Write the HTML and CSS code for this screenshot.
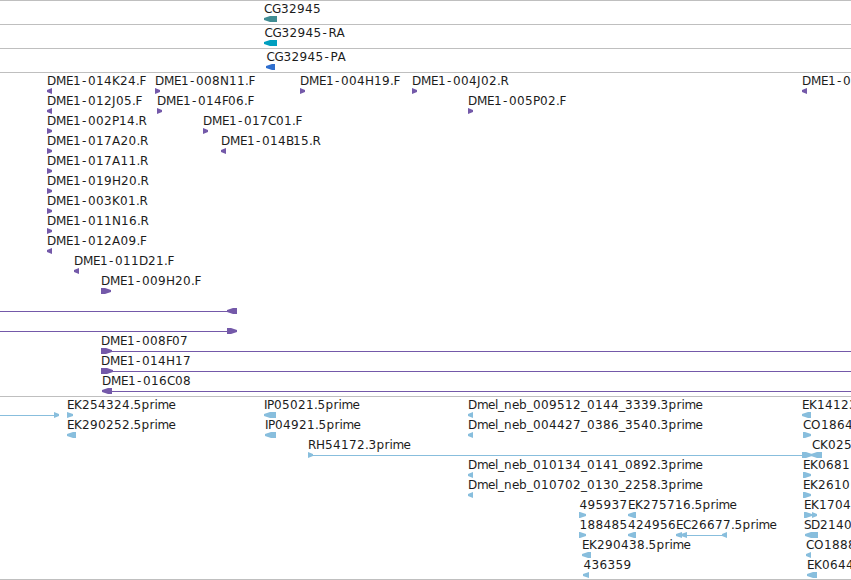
FILE: index.html
```html
<!DOCTYPE html>
<html lang="en">
<head>
    <meta charset="UTF-8">
    <title>Genome Tracks</title>
    <link rel="stylesheet" href="styles.css">
</head>
<body>
    <main class="viewer">
        <section class="track gene" id="gene"></section>
        <section class="track transcript" id="transcript"></section>
        <section class="track protein" id="protein"></section>
        <section class="track clones" id="clones"></section>
        <section class="track ests" id="ests"></section>
    </main>
    <script src="tracks.js"></script>
</body>
</html>
```
FILE: styles.css
```css
body {
    margin: 0;
    background: #fff;
    overflow: hidden;
}
.viewer {
    display: flex;
    flex-direction: column;
}
.track {
    box-sizing: border-box;
    height: 24px;
    border-top: 1px solid #bfbfbf;
    overflow: hidden;
}
.track svg {
    display: block;
    width: 100%;
    height: 100%;
}
.track text {
    font-family: "DejaVu Sans", sans-serif;
    font-size: 12px;
    fill: #1c1c1c;
}
.gene {
    color: #408d93;
}
.transcript {
    color: #009fbf;
}
.protein {
    color: #2f6fcf;
}
.clones {
    height: 324px;
    color: #7459a9;
}
.ests {
    height: 184px;
    border-bottom: 1px solid #bfbfbf;
    color: #88bedd;
}
.shape {
    fill: currentColor;
}
```
FILE: tracks.js
```js
const ROW = 20;
const SVG = 'http://www.w3.org/2000/svg';

// character widths in pixels
const WIDTHS = {
    A: 8.5, B: 7, C: 8, D: 9, E: 7, F: 6, G: 9, H: 9, I: 3, J: 4, K: 8, M: 10, N: 9,
    O: 10, P: 7, R: 8, S: 7, '-': 7, '.': 3.5, _: 6,
    b: 8, e: 7, i: 3, l: 3, m: 11, n: 8, p: 8, r: 5
};

// labels: [row, x, text]
// arrows: [row, start, end, direction]
// lines:  [row, start, end]
const tracks = {
    gene: { labels: [[0, 264, 'CG32945']], arrows: [[0, 264, 277, 'l']], lines: [] },
    transcript: { labels: [[0, 264.5, 'CG32945-RA']], arrows: [[0, 264, 277, 'l']], lines: [] },
    protein: { labels: [[0, 266.5, 'CG32945-PA']], arrows: [[0, 266, 275, 'l']], lines: [] },
    clones: {
        labels: [
            [0, 47, 'DME1-014K24.F'], [0, 155, 'DME1-008N11.F'], [0, 300, 'DME1-004H19.F'],
            [0, 412, 'DME1-004J02.R'], [0, 802, 'DME1-0'],
            [1, 47, 'DME1-012J05.F'], [1, 157, 'DME1-014F06.F'], [1, 468, 'DME1-005P02.F'],
            [2, 47, 'DME1-002P14.R'], [2, 203, 'DME1-017C01.F'],
            [3, 47, 'DME1-017A20.R'], [3, 221, 'DME1-014B15.R'],
            [4, 47, 'DME1-017A11.R'],
            [5, 47, 'DME1-019H20.R'],
            [6, 47, 'DME1-003K01.R'],
            [7, 47, 'DME1-011N16.R'],
            [8, 47, 'DME1-012A09.F'],
            [9, 74, 'DME1-011D21.F'],
            [10, 101, 'DME1-009H20.F'],
            [13, 101, 'DME1-008F07'],
            [14, 101, 'DME1-014H17'],
            [15, 102, 'DME1-016C08']
        ],
        arrows: [
            [0, 47, 52, 'l'], [0, 155, 160, 'r'], [0, 300, 305, 'r'], [0, 412, 417, 'r'], [0, 802, 807, 'l'],
            [1, 47, 52, 'l'], [1, 157, 162, 'r'], [1, 468, 473, 'r'],
            [2, 47, 52, 'r'], [2, 203, 208, 'r'],
            [3, 47, 52, 'r'], [3, 221, 226, 'l'],
            [4, 47, 52, 'r'], [5, 47, 52, 'r'], [6, 47, 52, 'r'], [7, 47, 52, 'r'],
            [8, 47, 52, 'l'], [9, 74, 79, 'l'],
            [10, 101, 111, 'r'],
            [11, 227, 237, 'l'], [12, 227, 237, 'r'],
            [13, 101, 112, 'r'], [14, 101, 113, 'r'], [15, 102, 112, 'l']
        ],
        lines: [[11, 0, 230], [12, 0, 230], [13, 110, 851], [14, 110, 851], [15, 110, 851]]
    },
    ests: {
        labels: [
            [0, 67, 'EK254324.5prime'], [0, 264, 'IP05021.5prime'],
            [0, 468, 'Dmel_neb_009512_0144_3339.3prime'], [0, 802, 'EK14123'],
            [1, 67, 'EK290252.5prime'], [1, 265, 'IP04921.5prime'],
            [1, 468, 'Dmel_neb_004427_0386_3540.3prime'], [1, 803, 'CO1864'],
            [2, 308, 'RH54172.3prime'], [2, 812, 'CK025'],
            [3, 468, 'Dmel_neb_010134_0141_0892.3prime'], [3, 803, 'EK0681'],
            [4, 468, 'Dmel_neb_010702_0130_2258.3prime'], [4, 803, 'EK2610'],
            [5, 579.5, '495937'], [5, 628, 'EK275716.5prime'], [5, 804, 'EK1704'],
            [6, 579.5, '188485'], [6, 628, '424956'], [6, 676, 'EC26677.5prime'], [6, 804, 'SD2140'],
            [7, 582, 'EK290438.5prime'], [7, 806, 'CO1888'],
            [8, 583.5, '436359'], [8, 807, 'EK0644']
        ],
        arrows: [
            [0, 54, 59, 'r'], [0, 67, 73, 'r'], [0, 264, 276, 'l'], [0, 468, 473, 'l'], [0, 802, 811, 'l'],
            [1, 67, 76, 'l'], [1, 265, 276, 'l'], [1, 468, 473, 'l'], [1, 803, 811, 'r'],
            [2, 308, 313, 'r'], [2, 802, 812, 'r'], [2, 811, 822, 'l'],
            [3, 468, 473, 'l'], [3, 803, 811, 'r'],
            [4, 468, 473, 'l'], [4, 803, 811, 'r'],
            [5, 579, 586, 'r'], [5, 628, 636, 'l'], [5, 804, 812, 'r'], [5, 812, 817, 'r'],
            [6, 579, 586, 'r'], [6, 628, 636, 'l'], [6, 676, 682, 'l'], [6, 681, 687, 'l'],
            [6, 722, 727, 'l'], [6, 805, 818, 'l'],
            [7, 582, 591, 'l'], [7, 806, 811, 'l'],
            [8, 583, 589, 'l'], [8, 807, 817, 'l']
        ],
        lines: [[0, 0, 56], [2, 310, 804], [6, 685, 724]]
    }
};

function add(parent, name, attrs) {
    const el = document.createElementNS(SVG, name);
    for (const key in attrs) el.setAttribute(key, attrs[key]);
    parent.appendChild(el);
    return el;
}

function charPositions(x, text) {
    const xs = [];
    for (const ch of text) {
        xs.push(ch === '-' ? x + 1 : x);
        x += WIDTHS[ch] || 8;
    }
    return xs.join(' ');
}

function arrowPath(row, start, end, dir) {
    const top = row * ROW + 15;
    const head = Math.min(6, end - start);
    // the flat end, the shoulder and the tip
    const flat = dir === 'r' ? start : end;
    const tip = dir === 'r' ? end : start;
    const shoulder = dir === 'r' ? end - head : start + head;
    return `M${flat} ${top}H${shoulder}L${tip} ${top + 2}V${top + 4}L${shoulder} ${top + 6}H${flat}Z`;
}

for (const id in tracks) {
    const track = tracks[id];
    const svg = add(document.getElementById(id), 'svg', {});
    for (const [row, start, end] of track.lines) {
        add(svg, 'rect', { class: 'shape', x: start, y: row * ROW + 18, width: end - start, height: 1 });
    }
    for (const [row, start, end, dir] of track.arrows) {
        add(svg, 'path', { class: 'shape', d: arrowPath(row, start, end, dir) });
    }
    for (const [row, x, text] of track.labels) {
        const label = add(svg, 'text', { x: charPositions(x, text), y: row * ROW + 12 });
        label.textContent = text;
    }
}
```
